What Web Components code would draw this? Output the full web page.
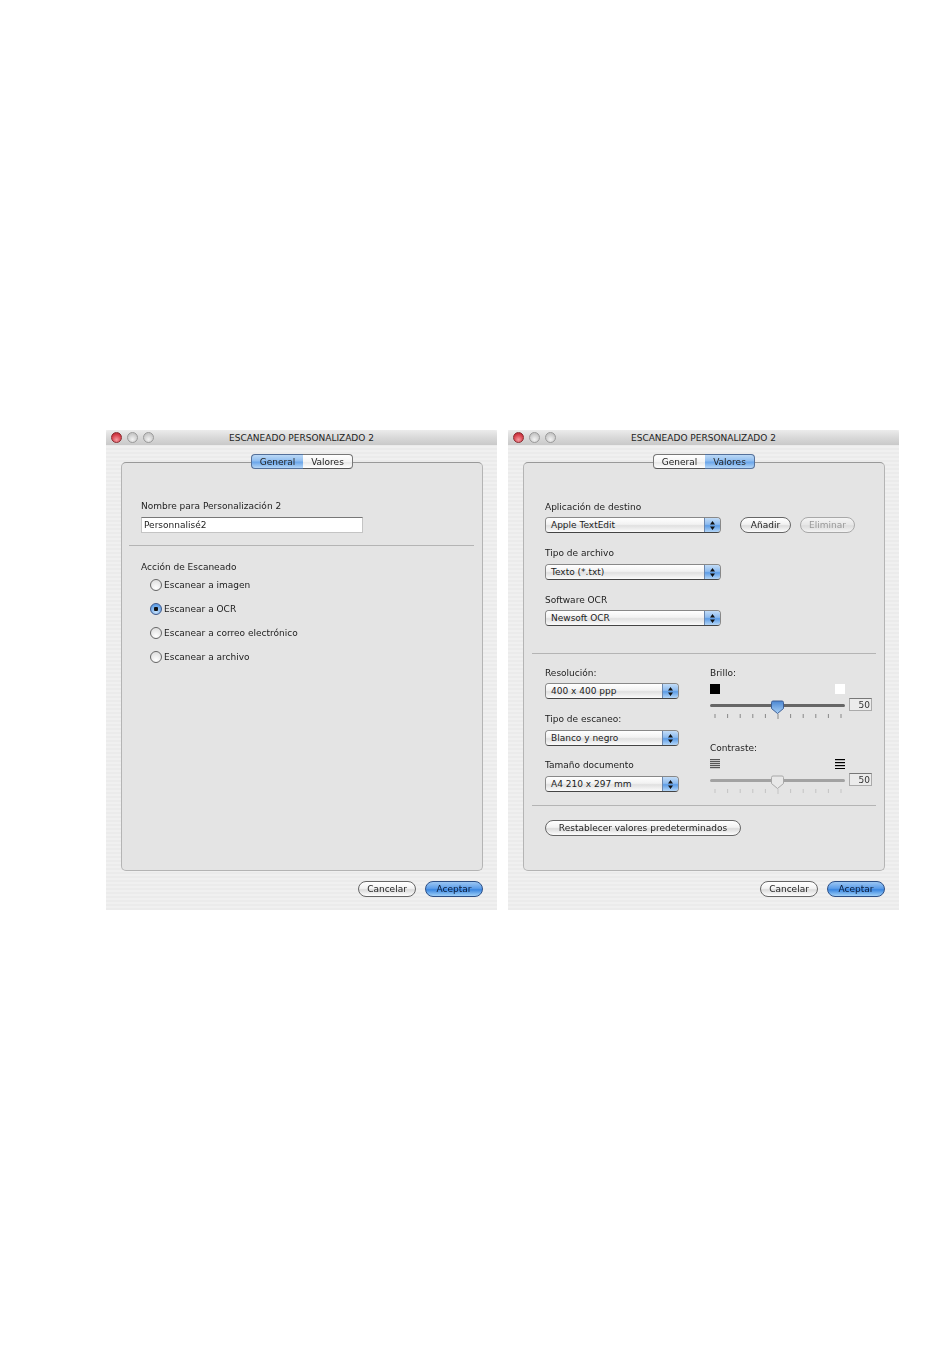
<!DOCTYPE html>
<html lang="es">
<head>
<meta charset="utf-8">
<title>Escaneado personalizado</title>
<style>
  html, body { margin: 0; padding: 0; background: #fff; }
  body {
    width: 950px;
    height: 1372px;
    overflow: hidden;
    font: 9px/12px "DejaVu Sans", sans-serif;
    color: #222;
  }
</style>
</head>
<body>
<mac-desktop>
  <mac-window heading="ESCANEADO PERSONALIZADO 2">
    <mac-tabs active="0"><span>General</span><span>Valores</span></mac-tabs>
    <mac-stack style="--pad-top:37px">
      <mac-label>Nombre para Personalización 2</mac-label>
      <mac-input value="Personnalisé2" style="margin-top:5px"></mac-input>
      <mac-rule style="margin:12px 8px 0 -12px"></mac-rule>
      <mac-label style="margin-top:15px">Acción de Escaneado</mac-label>
      <mac-radio>Escanear a imagen</mac-radio>
      <mac-radio checked>Escanear a OCR</mac-radio>
      <mac-radio>Escanear a correo electrónico</mac-radio>
      <mac-radio>Escanear a archivo</mac-radio>
    </mac-stack>
  </mac-window>

  <mac-window heading="ESCANEADO PERSONALIZADO 2">
    <mac-tabs active="1"><span>General</span><span>Valores</span></mac-tabs>
    <mac-stack style="--pad-top:38px;--pad-left:21px">
      <mac-label>Aplicación de destino</mac-label>
      <mac-row style="margin-top:4px">
        <mac-select width="176">Apple TextEdit</mac-select>
        <mac-button style="margin-left:19px;width:51px">Añadir</mac-button>
        <mac-button disabled style="margin-left:9px;width:55px">Eliminar</mac-button>
      </mac-row>
      <mac-label style="margin-top:14px">Tipo de archivo</mac-label>
      <mac-select width="176" style="margin-top:5px">Texto (*.txt)</mac-select>
      <mac-label style="margin-top:14px">Software OCR</mac-label>
      <mac-select width="176" style="margin-top:4px">Newsoft OCR</mac-select>
      <mac-rule style="margin:27px 8px 0 -13px"></mac-rule>
      <mac-row style="margin-top:13px;align-items:flex-start">
        <mac-col style="width:165px">
          <mac-label>Resolución:</mac-label>
          <mac-select width="134" style="margin-top:4px">400 x 400 ppp</mac-select>
          <mac-label style="margin-top:14px">Tipo de escaneo:</mac-label>
          <mac-select width="134" style="margin-top:5px">Blanco y negro</mac-select>
          <mac-label style="margin-top:13px">Tamaño documento</mac-label>
          <mac-select width="134" style="margin-top:5px">A4 210 x 297 mm</mac-select>
        </mac-col>
        <mac-col>
          <mac-label>Brillo:</mac-label>
          <mac-level kind="brightness" style="margin-top:5px"></mac-level>
          <mac-slider value="50" style="margin-top:4px" accent></mac-slider>
          <mac-label style="margin-top:23px">Contraste:</mac-label>
          <mac-level kind="contrast" style="margin-top:5px"></mac-level>
          <mac-slider value="50" style="margin-top:4px"></mac-slider>
        </mac-col>
      </mac-row>
      <mac-rule style="margin:11px 8px 0 -13px"></mac-rule>
      <mac-button style="margin-top:14px;width:196px">Restablecer valores predeterminados</mac-button>
    </mac-stack>
  </mac-window>
</mac-desktop>

<script>
// helper, each element only has to give its css and html
class MacBase extends HTMLElement {
  constructor() {
    super();
    this.attachShadow({mode: "open"});
  }
  connectedCallback() {
    const template = document.createElement("template");
    template.innerHTML = `<style>${this.css()}</style>${this.html()}`;
    this.shadowRoot.appendChild(template.content.cloneNode(true));
  }
  css() { return ":host { display: block; }"; }
  html() { return "<slot></slot>"; }
}

class MacDesktop extends MacBase {
  css() {
    return `:host { display: flex; gap: 11px; padding: 430px 0 0 106px; filter: blur(.4px); }`;
  }
}

class MacWindow extends MacBase {
  css() {
    return `
    :host {
      display: flex;
      flex-direction: column;
      width: 391px;
      height: 480px;
      background: repeating-linear-gradient(#f0f0f0 0 2px, #ebebeb 2px 4px);
    }
    .title {
      position: relative;
      display: flex;
      align-items: center;
      justify-content: center;
      height: 15px;
      background: linear-gradient(#ececec, #d9d9d9 50%, #c9c9c9);
      border-radius: 3px 3px 0 0;
      font-size: 9px;
      color: #222;
    }
    .dots {
      position: absolute;
      left: 5px;
      top: 2px;
      display: flex;
      gap: 5px;
    }
    .dot {
      width: 11px;
      height: 11px;
      border-radius: 50%;
      box-sizing: border-box;
      border: 1px solid #9a9a9a;
      background: radial-gradient(circle at 50% 70%, #f2f2f2, #c8c8c8 70%);
    }
    .dot.red {
      border-color: #8a2a30;
      background: radial-gradient(circle at 50% 75%, #f59aa0, #d8414c 60%, #a8232c);
    }
    .body { padding: 9px 14px 0 15px; display: flex; flex-direction: column; }
    .panel {
      height: 409px;
      margin-top: -7px;
      box-sizing: border-box;
      background: #e4e4e4;
      border: 1px solid #b4b4b4;
      border-top-color: #999;
      border-radius: 5px;
    }
    .tabs { position: relative; z-index: 1; display: flex; justify-content: center; }
    .footer { display: flex; justify-content: flex-end; gap: 9px; margin-top: 10px; }
    `;
  }
  html() {
    return `
    <div class="title">
      <div class="dots"><div class="dot red"></div><div class="dot"></div><div class="dot"></div></div>
      ${this.getAttribute("heading")}
    </div>
    <div class="body">
      <div class="tabs"><slot name="tabs"></slot></div>
      <div class="panel"><slot></slot></div>
      <div class="footer">
        <mac-button style="width:58px">Cancelar</mac-button>
        <mac-button primary style="width:58px">Aceptar</mac-button>
      </div>
    </div>`;
  }
  connectedCallback() {
    super.connectedCallback();
    this.querySelector("mac-tabs").slot = "tabs";
  }
}

class MacTabs extends MacBase {
  css() {
    return `
    :host { display: flex; height: 15px; box-sizing: border-box; }
    .tab {
      display: flex;
      align-items: center;
      justify-content: center;
      height: 15px;
      box-sizing: border-box;
      border: 1px solid #777;
      border-bottom-color: #555;
      background: linear-gradient(#fff, #f4f4f4 50%, #e8e8e8 55%, #fff);
      color: #222;
    }
    .first { width: 52px; border-radius: 4px 0 0 4px; border-right: 0; }
    .last { width: 50px; border-radius: 0 4px 4px 0; border-left: 0; }
    .on {
      background: linear-gradient(#bcd9f6, #8fbdf0 45%, #6ba6ea 55%, #b4d6f7);
      border-color: #54709a;
    }
    `;
  }
  html() {
    const active = parseInt(this.getAttribute("active"));
    const names = [...this.querySelectorAll("span")].map(s => s.textContent);
    return names.map((n, i) => `<div class="tab ${i === 0 ? "first" : "last"} ${i === active ? "on" : ""}">${n}</div>`).join("");
  }
}

class MacStack extends MacBase {
  css() {
    return `:host { display: flex; flex-direction: column; align-items: flex-start;
      padding: var(--pad-top, 38px) 0 0 var(--pad-left, 19px); }`;
  }
}

class MacRow extends MacBase {
  css() { return `:host { display: flex; align-items: center; }`; }
}

class MacCol extends MacBase {
  css() { return `:host { display: flex; flex-direction: column; align-items: flex-start; }`; }
}

class MacLabel extends MacBase {
  css() { return `:host { display: block; height: 12px; line-height: 12px; white-space: nowrap; color: #1c1c1c; }`; }
}

class MacRule extends MacBase {
  css() {
    return `:host { display: block; align-self: stretch; height: 1px; background: #b4b4b4; }`;
  }
  html() { return ""; }
}

class MacInput extends MacBase {
  css() {
    return `
    :host {
      display: block;
      width: 222px;
      height: 16px;
      box-sizing: border-box;
      padding-left: 2px;
      line-height: 15px;
      background: #fff;
      border: 1px solid #c4c4c4;
      border-top-color: #777;
      color: #222;
    }`;
  }
  html() { return this.getAttribute("value"); }
}

class MacRadio extends MacBase {
  css() {
    return `
    :host { display: flex; align-items: center; height: 24px; padding-left: 9px; white-space: nowrap; color: #1c1c1c; }
    .dot {
      width: 12px;
      height: 12px;
      margin-right: 2px;
      box-sizing: border-box;
      border: 1px solid #666;
      border-radius: 50%;
      background: radial-gradient(circle at 50% 80%, #fff, #e4e4e4 70%);
    }
    :host([checked]) .dot {
      border-color: #40588a;
      background: radial-gradient(circle, #111 0 2px, transparent 2.5px),
        radial-gradient(circle at 50% 80%, #c4e0fa, #5f9fe6 75%);
    }`;
  }
  html() { return `<div class="dot"></div><slot></slot>`; }
}

class MacSelect extends MacBase {
  css() {
    return `
    :host {
      display: flex;
      width: ${this.getAttribute("width")}px;
      height: 16px;
      box-sizing: border-box;
      border: 1px solid #888;
      border-bottom-color: #444;
      border-radius: 4px;
      overflow: hidden;
      line-height: 14px;
      color: #1c1c1c;
      white-space: nowrap;
    }
    .text {
      flex: 1;
      padding-left: 5px;
      background: linear-gradient(#fff, #f2f2f2 45%, #e0e0e0 55%, #fbfbfb);
    }
    .arrows {
      display: flex;
      width: 15px;
      align-items: center;
      justify-content: center;
      background: linear-gradient(#c2dcf7, #8dbbef 45%, #5c9ce6 55%, #b4d6f7);
      border-left: 1px solid #6a86ad;
    }
    svg { display: block; }`;
  }
  html() {
    return `<div class="text"><slot></slot></div>
    <div class="arrows"><svg width="5" height="9" viewBox="0 0 5 9"><path d="M2.5 0 5 3.4H0zM2.5 9 5 5.6H0z" fill="#111"/></svg></div>`;
  }
}

class MacButton extends MacBase {
  css() {
    return `
    :host {
      display: flex;
      align-items: center;
      justify-content: center;
      height: 16px;
      box-sizing: border-box;
      border: 1px solid #666;
      border-radius: 8px;
      background: linear-gradient(#fff, #f2f2f2 45%, #dcdcdc 55%, #fdfdfd);
      color: #1c1c1c;
      white-space: nowrap;
    }
    :host([disabled]) { border-color: #a8a8a8; color: #999; background: linear-gradient(#f4f4f4, #e6e6e6 50%, #dcdcdc 55%, #f2f2f2); }
    :host([primary]) {
      border-color: #2c4f86;
      background: linear-gradient(#9cc6f2, #5d9eea 45%, #3a86e0 55%, #9fd0f8);
      color: #0a1a36;
    }`;
  }
}

class MacLevel extends MacBase {
  css() {
    return `:host { display: flex; justify-content: space-between; width: 135px; height: 10px; }
    svg { display: block; }`;
  }
  html() {
    if (this.getAttribute("kind") === "brightness") {
      return `<svg width="10" height="10"><rect width="10" height="10" fill="#000"/></svg>
      <svg width="10" height="10"><rect width="10" height="10" fill="#fff"/></svg>`;
    }
    const bars = (color, ys) => `<svg width="10" height="10">${ys.map(y => `<rect y="${y}" width="10" height="1.2" fill="${color}"/>`).join("")}</svg>`;
    return bars("#555", [0, 2, 4, 6, 8]) + bars("#000", [0, 3, 6, 9]);
  }
}

class MacSlider extends MacBase {
  css() {
    return `
    :host { display: flex; align-items: flex-start; gap: 4px; height: 21px; }
    svg { display: block; }
    .num {
      width: 23px;
      height: 13px;
      box-sizing: border-box;
      padding-right: 1px;
      text-align: right;
      line-height: 12px;
      background: #ebebeb;
      border: 1px solid #aaa;
      border-top-color: #777;
      color: #333;
    }`;
  }
  html() {
    const accent = this.hasAttribute("accent");
    let ticks = "";
    for (let i = 0; i < 11; i++) {
      const x = 4.5 + i * 12.6;
      ticks += `<rect x="${x.toFixed(1)}" y="16" width="1" height="${i === 5 ? 5 : 4}" fill="${accent ? "#888" : "#c4c4c4"}"/>`;
    }
    const track = accent ? "#666" : "#a2a2a2";
    const fill = accent ? "url(#th)" : "#e8e8e8";
    const edge = accent ? "#3d5f96" : "#a8a8a8";
    return `<svg width="135" height="21" viewBox="0 0 135 21">
      <defs><linearGradient id="th" x1="0" y1="0" x2="0" y2="1">
        <stop offset="0" stop-color="#4a86d2"/><stop offset="1" stop-color="#a8d0f6"/>
      </linearGradient></defs>
      ${ticks}
      <rect x="0" y="6" width="135" height="3" rx="1.5" fill="${track}"/>
      <path d="M61.5 4.5q0-1.5 1.5-1.5h9q1.5 0 1.5 1.5v6l-6 5-6-5z" fill="${fill}" stroke="${edge}"/>
    </svg>
    <div class="num">${this.getAttribute("value")}</div>`;
  }
}

window.customElements.define("mac-desktop", MacDesktop);
window.customElements.define("mac-window", MacWindow);
window.customElements.define("mac-tabs", MacTabs);
window.customElements.define("mac-stack", MacStack);
window.customElements.define("mac-row", MacRow);
window.customElements.define("mac-col", MacCol);
window.customElements.define("mac-label", MacLabel);
window.customElements.define("mac-rule", MacRule);
window.customElements.define("mac-input", MacInput);
window.customElements.define("mac-radio", MacRadio);
window.customElements.define("mac-select", MacSelect);
window.customElements.define("mac-button", MacButton);
window.customElements.define("mac-level", MacLevel);
window.customElements.define("mac-slider", MacSlider);
</script>
</body>
</html>
